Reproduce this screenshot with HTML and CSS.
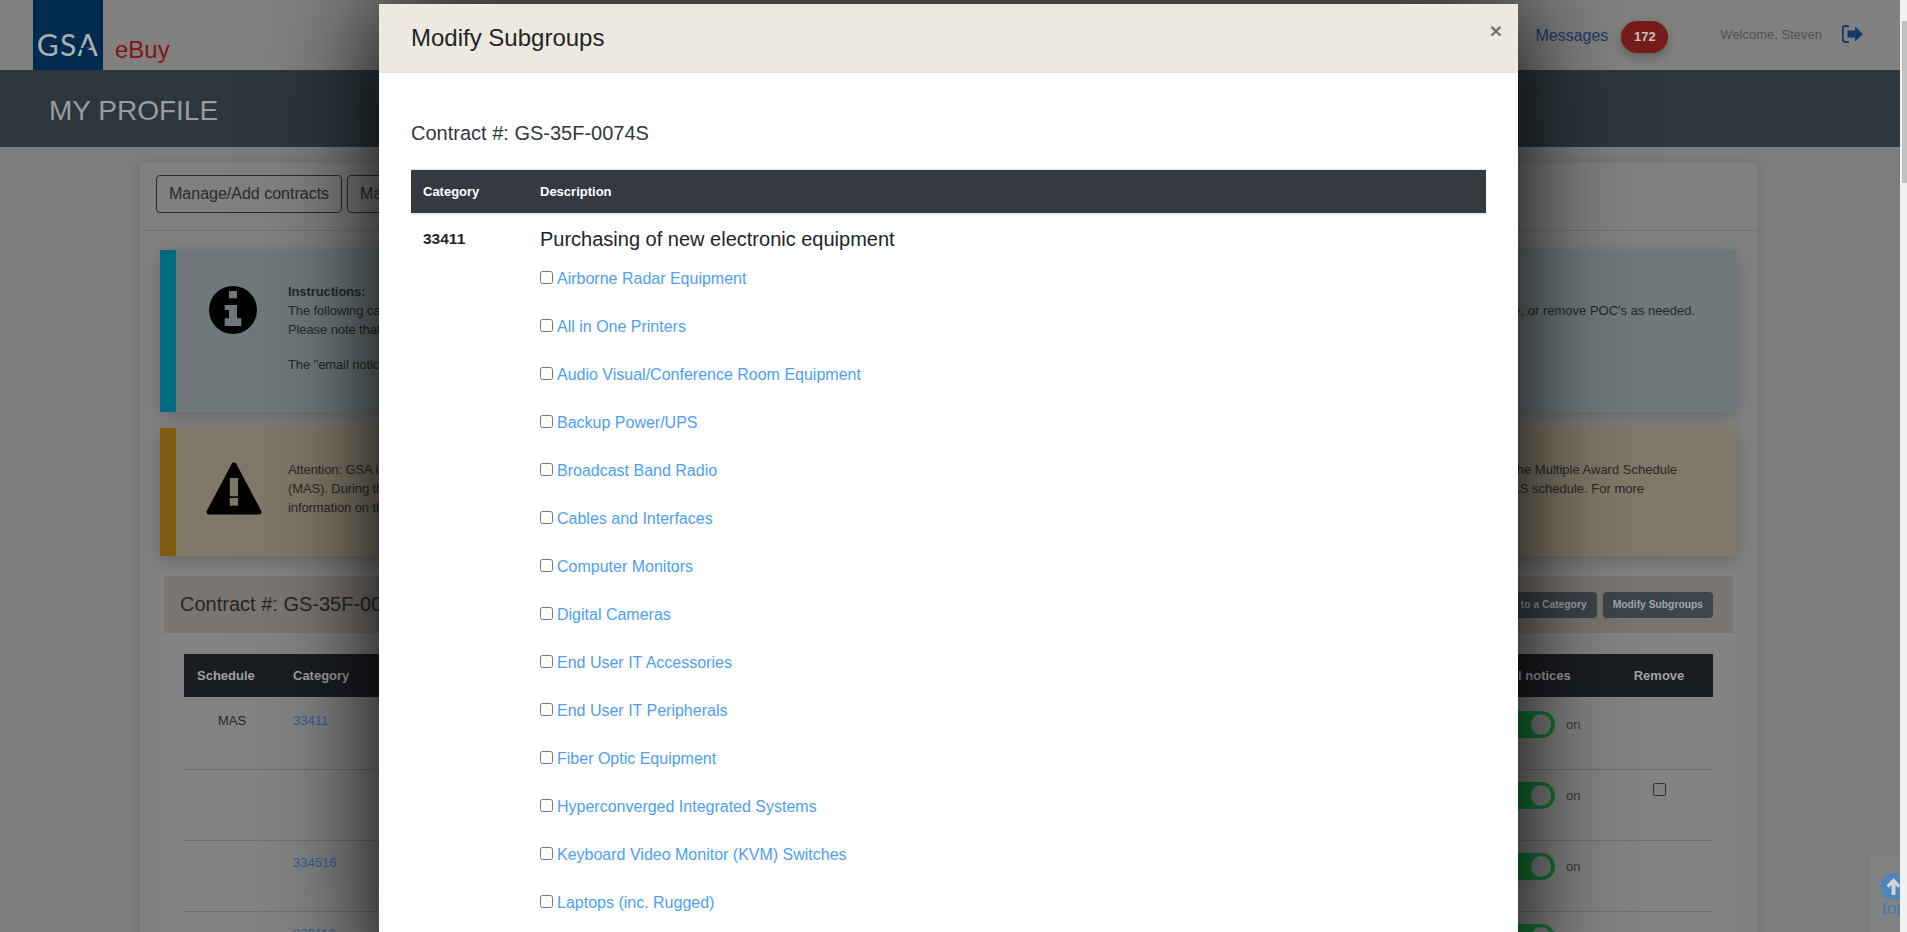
FILE: index.html
```html
<!DOCTYPE html>
<html lang="en">
<head>
<meta charset="utf-8">
<title>GSA eBuy - My Profile</title>
<link rel="stylesheet" href="styles.css">
</head>
<body>
<div class="app">
  <div class="viewport">
    <header class="topbar">
      <div class="brand">
        <div class="logo"><span class="logo-text">GSA</span>
          <svg class="logo-star" viewBox="0 0 12 12"><polygon points="6,0 7.5,4.3 12,4.5 8.4,7.2 9.7,11.6 6,9 2.3,11.6 3.6,7.2 0,4.5 4.5,4.3"/></svg>
        </div>
        <span class="ebuy">eBuy</span>
      </div>
      <nav class="usernav">
        <a class="messages">Messages</a>
        <span class="badge">172</span>
        <span class="welcome">Welcome, Steven</span>
        <svg class="logout" viewBox="0 0 21 18"><path d="M7 1H3.2A2.4 2.4 0 0 0 .9 3.4v11.2A2.4 2.4 0 0 0 3.2 17H7" fill="none" stroke="#123a66" stroke-width="1.8"/><path d="M5.5 5.6H13V1.4L21 9l-8 7.6v-4.2H5.5z" fill="#123a66"/></svg>
      </nav>
    </header>
    <div class="band"><h1>MY PROFILE</h1></div>
    <main class="card">
      <div class="card-head">
        <button class="outline-btn">Manage/Add contracts</button>
        <button class="outline-btn">Manage POCs</button>
      </div>
      <div class="card-body">
        <section class="alert alert-info">
          <div class="alert-icon">
            <svg class="icon-info" viewBox="0 0 48 48"><path fill-rule="evenodd" d="M24 0a24 24 0 1 1 0 48a24 24 0 1 1 0-48zM20 5v7.3h8V5zM15.700 19v5H20v8.300H15.700V40H32.300V32.300H28V19z"/></svg>
          </div>
          <div class="alert-text">
            <strong>Instructions:</strong>
            <div class="ln ln-info"><span>The following categories are listed for your contract. You may add,</span><span>update, or remove POC's as needed.</span></div>
            <div>Please note that changes may take a moment to appear.</div>
            <div class="blank"></div>
            <div>The "email notices" switch turns notices on or off for each category.</div>
          </div>
        </section>
        <section class="alert alert-warn">
          <div class="alert-icon">
            <svg class="icon-warn" viewBox="0 0 56 53"><polygon points="28,3 3,50 53,50" stroke="#000" stroke-width="5" stroke-linejoin="round"/><rect x="23.800" y="16" width="8.300" height="18.300" fill="#807868"/><rect x="23.800" y="36" width="8.300" height="7.700" fill="#807868"/></svg>
          </div>
          <div class="alert-text">
            <div class="ln ln-w1"><span>Attention: GSA is consolidating its Federal Supply Schedules into</span><span>the Multiple Award Schedule</span></div>
            <div class="ln ln-w2"><span>(MAS). During this transition your categories are moved to the</span><span>MAS schedule. For more</span></div>
            <div>information on the consolidation, see the GSA website.</div>
          </div>
        </section>
        <section class="contract">
          <div class="contract-head">
            <h2>Contract #: GS-35F-0074S</h2>
            <div class="contract-actions">
              <button class="dark-btn">Add Schedule to a Category</button>
              <button class="dark-btn">Modify Subgroups</button>
            </div>
          </div>
          <table class="schedule">
            <thead>
              <tr><th class="c-sched">Schedule</th><th class="c-cat">Category</th><th>Description</th><th class="c-mail">Email notices</th><th class="c-rem">Remove</th></tr>
            </thead>
            <tbody>
              <tr><td class="mas">MAS</td><td><a>33411</a></td><td></td><td><div class="switch-row"><span class="switch"><i></i></span><span>on</span></div></td><td></td></tr>
              <tr><td></td><td></td><td></td><td><div class="switch-row"><span class="switch"><i></i></span><span>on</span></div></td><td class="rem"><input type="checkbox" class="dim-check"></td></tr>
              <tr><td></td><td><a>334516</a></td><td></td><td><div class="switch-row"><span class="switch"><i></i></span><span>on</span></div></td><td></td></tr>
              <tr><td></td><td><a>339113</a></td><td></td><td><div class="switch-row"><span class="switch"><i></i></span><span>on</span></div></td><td></td></tr>
            </tbody>
          </table>
        </section>
      </div>
    </main>
    <a class="to-top">
      <span>top</span>
      <svg viewBox="0 0 27 27"><circle cx="13.500" cy="13.500" r="13.500" fill="#4f86b8"/><path d="M13.500 5L20.500 12.500l-2.400 2.300-2.600-2.800V22h-4v-10l-2.600 2.800-2.400-2.300z" fill="#d0d3d5"/></svg>
    </a>
    <div class="modal">
      <div class="modal-head">
        <h3>Modify Subgroups</h3>
        <span class="close">×</span>
      </div>
      <div class="modal-body">
        <h4>Contract #: GS-35F-0074S</h4>
        <table class="subgroups">
          <thead><tr><th class="m-cat">Category</th><th>Description</th></tr></thead>
          <tbody>
            <tr>
              <td class="code">33411</td>
              <td>
                <div class="purchase">Purchasing of new electronic equipment</div>
                <ul class="items">
                  <li><input type="checkbox"><a>Airborne Radar Equipment</a></li>
                  <li><input type="checkbox"><a>All in One Printers</a></li>
                  <li><input type="checkbox"><a>Audio Visual/Conference Room Equipment</a></li>
                  <li><input type="checkbox"><a>Backup Power/UPS</a></li>
                  <li><input type="checkbox"><a>Broadcast Band Radio</a></li>
                  <li><input type="checkbox"><a>Cables and Interfaces</a></li>
                  <li><input type="checkbox"><a>Computer Monitors</a></li>
                  <li><input type="checkbox"><a>Digital Cameras</a></li>
                  <li><input type="checkbox"><a>End User IT Accessories</a></li>
                  <li><input type="checkbox"><a>End User IT Peripherals</a></li>
                  <li><input type="checkbox"><a>Fiber Optic Equipment</a></li>
                  <li><input type="checkbox"><a>Hyperconverged Integrated Systems</a></li>
                  <li><input type="checkbox"><a>Keyboard Video Monitor (KVM) Switches</a></li>
                  <li><input type="checkbox"><a>Laptops (inc. Rugged)</a></li>
                </ul>
              </td>
            </tr>
          </tbody>
        </table>
      </div>
    </div>
  </div>
  <div class="scrollbar"><div class="thumb"></div></div>
</div>
</body>
</html>
```
FILE: styles.css
```css
* { box-sizing: border-box; }
html, body { margin: 0; height: 100%; overflow: hidden; }
body { font-family: "Liberation Sans", Arial, sans-serif; font-size: 13px; color: #222; background: #7c7d7f; }
.app { display: flex; height: 932px; }
.viewport { position: relative; flex: 1; min-width: 0; overflow: hidden; background: #7c7d7f; }

.topbar { height: 70px; background: #808080; display: flex; justify-content: space-between; padding-left: 33px; }
.brand { display: flex; }
.logo { position: relative; width: 70px; height: 70px; background: #002b50; display: flex; align-items: flex-end; justify-content: center; padding-bottom: 7px; }
.logo-text { font-family: Lato, "Open Sans", sans-serif; font-size: 30px; line-height: 38px; color: #aeaeae; letter-spacing: 1.5px; }
.logo-star { position: absolute; left: 46px; top: 44px; width: 11px; height: 11px; fill: #002b50; }
.ebuy { margin-left: 12px; font-size: 24px; line-height: 28px; padding-top: 36px; color: #7f1616; }
.usernav { display: flex; align-items: flex-start; padding-right: 37px; }
.messages { margin-top: 27px; font-size: 16px; line-height: 18px; color: #1c3b60; }
.badge { margin: 21px 0 0 13px; width: 47px; height: 32px; border-radius: 16px; background: #771c1a; color: #c8c0c0; font-size: 13px; font-weight: 700; line-height: 32px; text-align: center; box-shadow: 0 4px 10px rgba(0,0,0,.25); }
.welcome { margin: 26px 0 0 52px; font-size: 13px; line-height: 17px; color: #505050; }
.logout { margin: 25px 0 0 20px; width: 21px; height: 18px; }

.band { height: 77px; background: #2c373d; padding: 25px 0 0 49px; }
.band h1 { margin: 0; font-size: 28px; font-weight: 400; line-height: 32px; color: #9c9c9c; }

.card { margin: 16px 143px 0 140px; background: #808080; box-shadow: 0 0 12px rgba(0,0,0,.12); }
.card-head { display: flex; gap: 5px; padding: 12px 16px 17px; border-bottom: 1px solid #727272; }
.outline-btn { height: 38px; padding: 0 12px; background: transparent; border: 1px solid #2a2a2a; border-radius: 4px; font: 16px "Liberation Sans", sans-serif; color: #2a2a2a; }
.card-body { padding: 19px 20px 0; }

.alert { display: flex; border-left: 16px solid; margin-bottom: 16px; box-shadow: 0 4px 14px rgba(0,0,0,.18); }
.alert-info { height: 162px; background: #6f797b; border-color: #006a80; }
.alert-warn { height: 128px; background: #807868; border-color: #815c10; }
.alert-icon { flex: none; width: 112px; padding-left: 2px; display: flex; justify-content: center; align-items: flex-start; }
.icon-info { width: 48px; height: 48px; margin-top: 36px; }
.icon-warn { width: 56px; height: 53px; margin: 34px 0 0 2px; }
.alert-text { flex: 1; padding-top: 32px; font-size: 13px; line-height: 19px; color: #25282a; letter-spacing: -0.1px; }
.alert-text strong { display: block; }
.ln { display: flex; justify-content: space-between; }
.ln span { white-space: nowrap; }
.ln span:last-child { letter-spacing: 0; }
.ln-info { width: 1407px; }
.ln-w1 { width: 1389px; }
.ln-w2 { width: 1356px; }
.blank { height: 16px; }

.contract { background: #838383; padding: 4px 4px 0; }
.contract-head { height: 57px; background: #7a7570; display: flex; justify-content: space-between; align-items: center; padding: 0 20px 0 16px; }
.contract-head h2 { margin: 0; font-size: 20px; font-weight: 400; color: #262626; }
.contract-actions { display: flex; gap: 6px; }
.dark-btn { height: 26px; padding: 0 10px; background: #3d444a; border: 0; border-radius: 4px; font: 700 10.3px "Liberation Sans", sans-serif; color: #a3a6a9; }

.schedule { width: 1529px; margin: 21px 0 0 20px; border-collapse: collapse; table-layout: fixed; }
.schedule th { height: 43px; background: #1a1d21; color: #a0a2a4; font-size: 13px; font-weight: 700; text-align: left; padding: 0 13px; }
.schedule td { height: 71px; padding: 12px 13px 13px; vertical-align: top; line-height: 19px; border-bottom: 1px solid #6e6e6e; color: #25252c; }
.schedule tbody tr:first-child td { height: 72px; padding-top: 14px; }
.schedule a { color: #2f5f96; }
.c-sched { width: 96px; }
.c-cat { width: 120px; }
.c-mail { width: 131px; }
.c-rem { width: 108px; text-align: center !important; }
.mas { text-align: center; }
.rem { text-align: center; }
.switch-row { display: flex; align-items: flex-start; gap: 11px; color: #3c3c3c; line-height: 27px; }
.switch { display: block; position: relative; width: 68px; height: 27px; border-radius: 14px; background: #157a33; }
.switch i { position: absolute; right: 4px; top: 3px; width: 20px; height: 21px; border-radius: 50%; background: #808080; }
.dim-check { margin: 1px 0 0; width: 13px; height: 13px; appearance: none; border: 1px solid #333; border-radius: 2px; background: #808080; }

.to-top { position: absolute; left: 1870px; top: 855px; width: 30px; height: 77px; background: #818283; overflow: hidden; color: #4079b0; }
.to-top svg { position: absolute; left: 10px; top: 18px; width: 27px; height: 27px; }
.to-top span { position: absolute; left: 12px; top: 44px; font-size: 17px; line-height: 20px; }

.modal { position: absolute; left: 379px; top: 4px; width: 1139px; background: #fff; box-shadow: 0 0 100px #000; }
.modal-head { height: 69px; background: #eee9df; border-bottom: 1px solid #e5e8ea; display: flex; justify-content: space-between; align-items: flex-start; padding: 0 16px 0 32px; }
.modal-head h3 { margin: 18px 0 0; font-size: 24px; font-weight: 400; line-height: 32px; color: #212529; }
.close { margin-top: 15px; font-size: 21px; font-weight: 700; line-height: 24px; color: #79756e; }
.modal-body { padding: 46px 32px 40px; }
.modal-body h4 { margin: 0; font-size: 20px; font-weight: 400; line-height: 28px; color: #33373b; }
.subgroups { width: 100%; margin-top: 22px; border-collapse: collapse; border-top: 1px solid #dee2e6; }
.subgroups th { height: 44px; background: #343a40; color: #fff; font-size: 13px; font-weight: 700; text-align: left; padding: 0 12px; border-bottom: 2px solid #e9ecef; }
.m-cat { width: 117px; }
.subgroups td { padding: 12px; vertical-align: top; }
.code { font-size: 15.500px; font-weight: 700; color: #212529; line-height: 24px; }
.purchase { font-size: 20px; line-height: 24px; color: #212529; }
.items { list-style: none; margin: 18px 0 0; padding: 0; }
.items li { height: 48px; display: flex; align-items: flex-start; font-size: 16px; line-height: 20px; }
.items input { margin: 2px 4px 0 0; width: 13px; height: 13px; }
.items a { color: #4d9ff2; }

.scrollbar { flex: none; width: 7px; background: #f1f1f1; padding: 21px 0 0 2px; }
.thumb { height: 162px; background: #c1c1c1; }
```
